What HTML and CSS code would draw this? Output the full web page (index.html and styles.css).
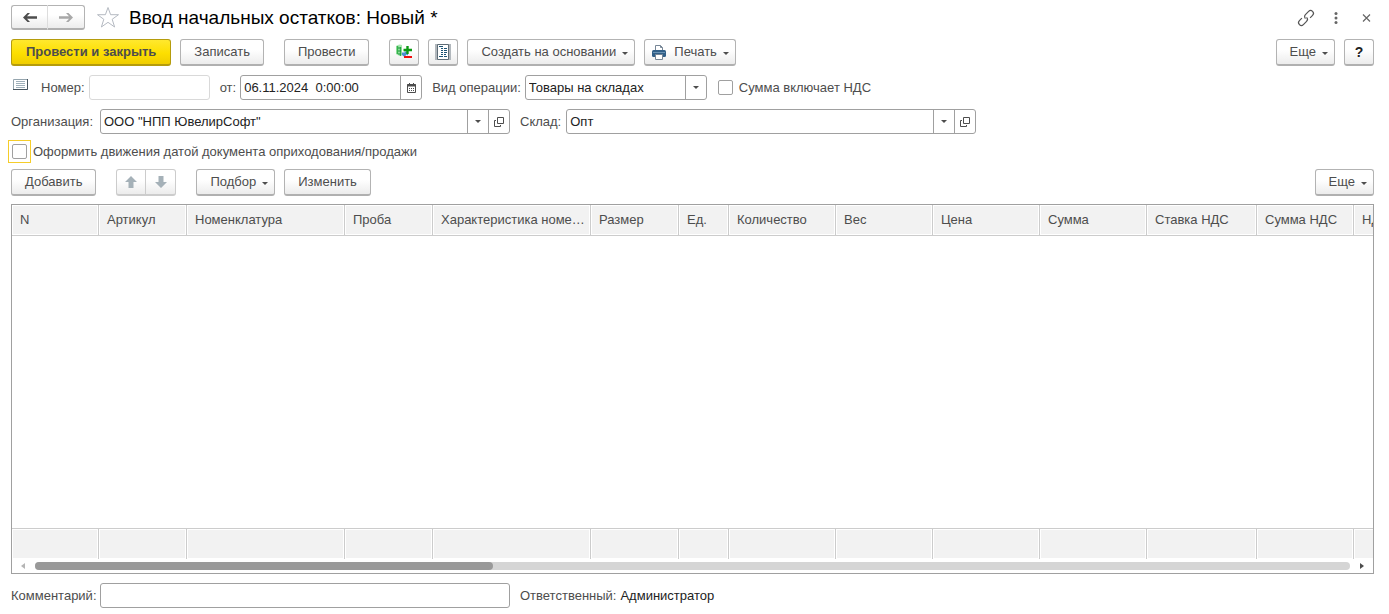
FILE: index.html
```html
<!DOCTYPE html>
<html lang="ru">
<head>
<meta charset="utf-8">
<meta name="viewport" content="width=device-width, initial-scale=1">
<title>Ввод начальных остатков: Новый *</title>
<link rel="stylesheet" href="styles.css">
</head>
<body>
<header class="titlebar">
  <div class="pair nav">
    <button class="btn" type="button" aria-label="Назад"><svg width="14" height="11" viewBox="0 0 14 11"><path d="M4.500 1 0 5.500 4.500 10H7L4 6.700h10V4.300H4L7 1z" fill="#4d4d4d"/></svg></button>
    <button class="btn" type="button" aria-label="Вперед"><svg width="14" height="11" viewBox="0 0 14 11"><path d="M9.500 1 14 5.500 9.500 10H7l3-3.300H0V4.300h10L7 1z" fill="#a8a8a8"/></svg></button>
  </div>
  <button class="icon-btn star" type="button" aria-label="В избранное"><svg width="24" height="23" viewBox="0 0 24 23"><path d="M12 1.500 14.600 8.700H22.500L16.200 13.300 18.600 21 12 16.300 5.400 21 7.800 13.300 1.500 8.700H9.400Z" fill="#fff" stroke="#b5bac2"/></svg></button>
  <h1 class="title">Ввод начальных остатков: Новый *</h1>
  <div class="window-tools">
    <button class="icon-btn" type="button" aria-label="Ссылка"><svg width="16" height="16" viewBox="0 0 16 16" fill="none" stroke="#555" stroke-width="1.200"><g transform="rotate(-45 8 8)"><path d="M5 5.200H1.500a2.800 2.800 0 0 0 0 5.600h4.500a2.800 2.800 0 0 0 2.800-2.800M11 10.800h3.500a2.800 2.800 0 0 0 0-5.600H10a2.800 2.800 0 0 0-2.800 2.800"/></g></svg></button>
    <button class="icon-btn" type="button" aria-label="Меню"><svg width="16" height="16" viewBox="0 0 16 16" fill="#666"><circle cx="8" cy="3.500" r="1.500"/><circle cx="8" cy="8" r="1.500"/><circle cx="8" cy="12.500" r="1.500"/></svg></button>
    <button class="icon-btn" type="button" aria-label="Закрыть"><svg width="16" height="16" viewBox="0 0 16 16" stroke="#666" stroke-width="1.200"><path d="M5 4.500l7 7M12 4.500l-7 7"/></svg></button>
  </div>
</header>

<div class="toolbar commands">
  <button class="btn primary" type="button">Провести и закрыть</button>
  <button class="btn" type="button">Записать</button>
  <button class="btn spaced" type="button">Провести</button>
  <button class="btn square spaced" type="button" aria-label="Движения документа"><svg width="16" height="16" viewBox="0 0 16 16"><path d="M0 2Q3-.5 6 1v10Q3 13 0 10z" fill="#a9e8b1"/><path d="M1.500 2v8M4.500 3v9" stroke="#35b34b" stroke-width="1.500"/><path d="M2 4h3M2 7h3M2 10h3" stroke="#16953a"/><path d="M6 11V8.500h3l-1-1h4v4l-1.500-1L8.500 13z" fill="#4a90cf"/><path d="M11.500 2v8M7.500 6H16" stroke="#0a9a12" stroke-width="2.400"/><path d="M8 13h8" stroke="#f00d0d" stroke-width="2"/></svg></button>
  <button class="btn square" type="button" aria-label="Отчет"><svg width="16" height="16" viewBox="0 0 16 16"><path d="M0 0h16v16H0z" fill="#b2b8bd"/><path d="M2.500.500h11v15h-11z" fill="#fff" stroke="#5f6d77"/><path d="M4 2.500h4M6 4.500h2M9 4.500h3M6 6.500h2M9 6.500h3M6 8.500h2M9 8.500h3M6 10.500h2M9 10.500h2M4 12.500h4M9 12.500h3" stroke="#1c5375"/></svg></button>
  <button class="btn menu" type="button">Создать на основании<span class="caret"></span></button>
  <button class="btn menu print" type="button"><svg width="14" height="15" viewBox="0 0 14 15"><path d="M3.500 6V.500h5l2 2V6" fill="#fff" stroke="#768696"/><path d="M8.500.500v2h2" fill="none" stroke="#768696"/><rect y="5" width="14" height="7" rx="1.500" fill="#315f88"/><path d="M1 7.500h12" stroke="#6b94b5"/><path d="M3.500 9.500h7v5h-7z" fill="#fff" stroke="#768696"/></svg>Печать<span class="caret"></span></button>
  <button class="btn menu push" type="button">Еще<span class="caret"></span></button>
  <button class="btn square help" type="button" aria-label="Справка">?</button>
</div>

<main class="form">
  <div class="row">
    <svg class="doc-icon" width="15" height="11" viewBox="0 0 15 11"><path d="M.5.500h14v10H.5z" fill="#fff" stroke="#95a5ae"/><path d="M14.500 0v10.500H0" fill="none" stroke="#47555f"/><path d="M3 2.500h9M3 4.500h9M3 6.500h9M3 8.500h9" stroke="#9fb0ba"/></svg>
    <label for="number">Номер:</label>
    <div class="field number"><input id="number" type="text"></div>
    <label for="date">от:</label>
    <div class="field medium"><input id="date" type="text" value="06.11.2024  0:00:00"><button type="button" aria-label="Выбрать дату"><svg width="9" height="10" viewBox="0 0 9 10"><path d="M.5 1.500h8v8h-8z" fill="#fff" stroke="#4d4d4d"/><path d="M0 2.500h9" stroke="#4d4d4d" stroke-width="2"/><path d="M2.500 0v2M6.500 0v2" stroke="#4d4d4d"/><path d="M2 5.500h1m1 0h1m1 0h1M2 7.500h1m1 0h1m1 0h1" stroke="#4d4d4d"/></svg></button></div>
    <label for="operation">Вид операции:</label>
    <div class="field medium choice"><select id="operation"><option>Товары на складах</option></select><span class="choice-arrow"><span class="caret"></span></span></div>
    <label class="check"><input type="checkbox">Сумма включает НДС</label>
  </div>
  <div class="row">
    <label class="lead" for="org">Организация:</label>
    <div class="field wide"><input id="org" type="text" value='ООО "НПП ЮвелирСофт"'><button type="button" aria-label="Выбрать организацию"><span class="caret"></span></button><button type="button" aria-label="Открыть организацию"><svg width="10" height="10" viewBox="0 0 10 10" fill="none" stroke="#4d4d4d"><path d="M3.500.500h6v6h-6zM2 3.500H.5v6h6V8"/></svg></button></div>
    <label for="store">Склад:</label>
    <div class="field wide"><input id="store" type="text" value="Опт"><button type="button" aria-label="Выбрать склад"><span class="caret"></span></button><button type="button" aria-label="Открыть склад"><svg width="10" height="10" viewBox="0 0 10 10" fill="none" stroke="#4d4d4d"><path d="M3.500.500h6v6h-6zM2 3.500H.5v6h6V8"/></svg></button></div>
  </div>
  <div class="option">
    <span class="focus"><input id="by-date" type="checkbox"></span>
    <label for="by-date">Оформить движения датой документа оприходования/продажи</label>
  </div>

  <div class="toolbar">
    <button class="btn" type="button">Добавить</button>
    <div class="pair move spaced">
      <button class="btn" type="button" aria-label="Вверх"><svg width="12" height="12" viewBox="0 0 12 12"><path d="M6 0l6 6H8.500v6h-5V6H0z" fill="#a5b1b8"/></svg></button>
      <button class="btn" type="button" aria-label="Вниз"><svg width="12" height="12" viewBox="0 0 12 12"><path d="M6 12l6-6H8.500V0h-5v6H0z" fill="#a5b1b8"/></svg></button>
    </div>
    <button class="btn menu spaced" type="button">Подбор<span class="caret"></span></button>
    <button class="btn" type="button">Изменить</button>
    <button class="btn menu push" type="button">Еще<span class="caret"></span></button>
  </div>

  <div class="grid-box">
    <div class="grid-view">
      <table class="goods">
        <colgroup><col class="c-n"><col class="c-m"><col class="c-l"><col class="c-m"><col class="c-l"><col class="c-m"><col class="c-unit"><col class="c-sum"><col class="c-price"><col class="c-sum"><col class="c-sum"><col class="c-rate"><col class="c-price"><col class="c-last"></colgroup>
        <thead><tr><th>N</th><th>Артикул</th><th>Номенклатура</th><th>Проба</th><th>Характеристика номенклатуры</th><th>Размер</th><th>Ед.</th><th>Количество</th><th>Вес</th><th>Цена</th><th>Сумма</th><th>Ставка НДС</th><th>Сумма НДС</th><th>НДС</th></tr></thead>
        <tbody><tr><td colspan="14"></td></tr></tbody>
        <tfoot><tr><td></td><td></td><td></td><td></td><td></td><td></td><td></td><td></td><td></td><td></td><td></td><td></td><td></td><td></td></tr></tfoot>
      </table>
    </div>
    <div class="scroll">
      <svg width="4" height="6" viewBox="0 0 4 6"><path d="M4 0v6L0 3z" fill="#b5b5b5"/></svg>
      <div class="track"><div class="thumb"></div></div>
      <svg width="4" height="6" viewBox="0 0 4 6"><path d="M0 0v6l4-3z" fill="#4d4d4d"/></svg>
    </div>
  </div>
</main>

<footer class="row">
  <label class="lead" for="comment">Комментарий:</label>
  <div class="field wide"><input id="comment" type="text"></div>
  <span>Ответственный:</span>
  <span class="person">Администратор</span>
</footer>
</body>
</html>
```
FILE: styles.css
```css
* { box-sizing: border-box; }

body {
  margin: 0;
  height: 100vh;
  min-height: 420px;
  padding: 5px 15px 6px 11px;
  display: flex;
  flex-direction: column;
  background: #fff;
  color: #4d4d4d;
  font: 13px/16px "Liberation Sans", Arial, sans-serif;
}

button, input, select { font: inherit; color: inherit; margin: 0; }
svg { display: block; flex: none; }

.titlebar { display: flex; align-items: center; height: 25px; }
.title { margin: 0 0 0 9px; font-size: 19px; line-height: 24px; font-weight: 400; color: #000; }
.window-tools { margin-left: auto; display: flex; gap: 14px; }
.icon-btn { border: 0; padding: 0; background: none; }
.icon-btn svg { overflow: visible; }
.star { margin-left: 11px; }

.btn {
  height: 27px;
  padding: 0 13px;
  display: flex;
  align-items: center;
  justify-content: center;
  border: 1px solid #b3b3b3;
  border-bottom: 2px solid #b0b0b0;
  border-radius: 3px;
  background: linear-gradient(#fff 40%, #ececec);
  white-space: nowrap;
}
.primary {
  padding: 0 14px;
  border-color: #b59c0c;
  background: linear-gradient(#ffe82e, #fddf00 55%, #f0cd00);
  font-weight: 700;
}
.square { width: 30px; padding: 0; }
.help { font-size: 14px; font-weight: 700; color: #222; }
.menu { padding-right: 6px; }
.print { padding-left: 7px; }
.print svg { margin-right: 8px; }

.caret {
  width: 0;
  border: 3px solid transparent;
  border-top-color: #4d4d4d;
  border-bottom: 0;
}
.menu .caret { margin: 2px 0 0 6px; }

.pair { display: flex; }
.pair .btn { padding: 0; border-radius: 3px 0 0 3px; }
.pair .btn + .btn { border-left: 0; border-radius: 0 3px 3px 0; }
.nav .btn { width: 37px; height: 25px; }
.nav .btn:first-child { border-right-color: #ddd; }
.move .btn { width: 30px; border-color: #ccc; }

.toolbar { display: flex; gap: 9px; }
.toolbar .spaced { margin-left: 11px; }
.toolbar .push { margin-left: auto; }
.commands { margin-top: 9px; }
.form .toolbar { margin-top: 6px; }

.form { flex: 1; min-height: 0; display: flex; flex-direction: column; padding-top: 9px; }
.row { display: flex; align-items: center; gap: 10px; white-space: nowrap; }
.form .row + .row { margin-top: 9px; }
.doc-icon { margin: 0 3px 6px 2px; }

.field {
  display: flex;
  height: 25px;
  border: 1px solid #a0a0a0;
  border-radius: 3px;
  background: #fff;
  color: #222;
  overflow: hidden;
}
.field input, .field select {
  flex: 1;
  min-width: 0;
  border: 0;
  padding: 0 3px;
  background: none;
  outline: 0;
  white-space: pre;
  appearance: none;
}
.field button, .choice-arrow {
  width: 21px;
  display: flex;
  align-items: center;
  justify-content: center;
  padding: 0;
  border: 0;
  border-left: 1px solid #a0a0a0;
  background: none;
}
.number { width: 121px; border-color: #d9d9d9; }
.row label + .number, .row label + .medium { margin-left: -6px; }
.medium { width: 182px; }
.wide { width: 410px; }
.row label + .wide { margin-left: -5px; }
.row .lead { width: 84px; }
.choice { display: grid; }
.choice > * { grid-area: 1 / 1; }
.choice-arrow { justify-self: end; pointer-events: none; }
.person { color: #222; margin-left: -6px; }

input[type="checkbox"] {
  appearance: none;
  width: 15px;
  height: 15px;
  border: 1px solid #a0a0a0;
  border-radius: 2px;
  background: #fff;
}
.check { display: flex; align-items: center; gap: 6px; margin-left: 1px; }
.option { display: flex; align-items: center; gap: 2px; margin: 6px 0 0 -3px; }
.focus { display: flex; padding: 3px; border: 1px solid #f5cd2a; }

.grid-box {
  flex: 1;
  min-height: 0;
  margin-top: 8px;
  display: grid;
  grid-template: minmax(0, 1fr) 14px / minmax(0, 1fr);
  border: 1px solid #a0a0a0;
}
.grid-view { overflow: hidden; }
.goods { width: 1442px; height: 100%; table-layout: fixed; border-collapse: separate; border-spacing: 0; }
.goods th, .goods td { padding: 0; }
.goods th {
  height: 31px;
  padding: 0 4px 0 8px;
  font-weight: 400;
  text-align: left;
  white-space: nowrap;
  overflow: hidden;
  text-overflow: ellipsis;
}
.goods th, .goods tfoot td {
  border-right: 1px solid #ccc;
  background: #f2f2f2;
  box-shadow: inset 0 0 0 1px #fff;
}
.goods th { border-bottom: 1px solid #ccc; }
.goods tfoot td { height: 31px; border-top: 1px solid #ccc; }
.c-n { width: 87px; }
.c-m { width: 88px; }
.c-l { width: 158px; }
.c-unit { width: 50px; }
.c-sum { width: 107px; }
.c-price { width: 97px; }
.c-rate { width: 110px; }
.c-last { width: 100px; }

.scroll { display: flex; align-items: center; gap: 10px; padding: 0 9px; }
.track { flex: 1; height: 8px; border-radius: 4px; background: #d5d5d5; }
.thumb { width: 34.8%; height: 8px; border-radius: 4px; background: #999; }

footer.row { margin-top: 9px; }
```
